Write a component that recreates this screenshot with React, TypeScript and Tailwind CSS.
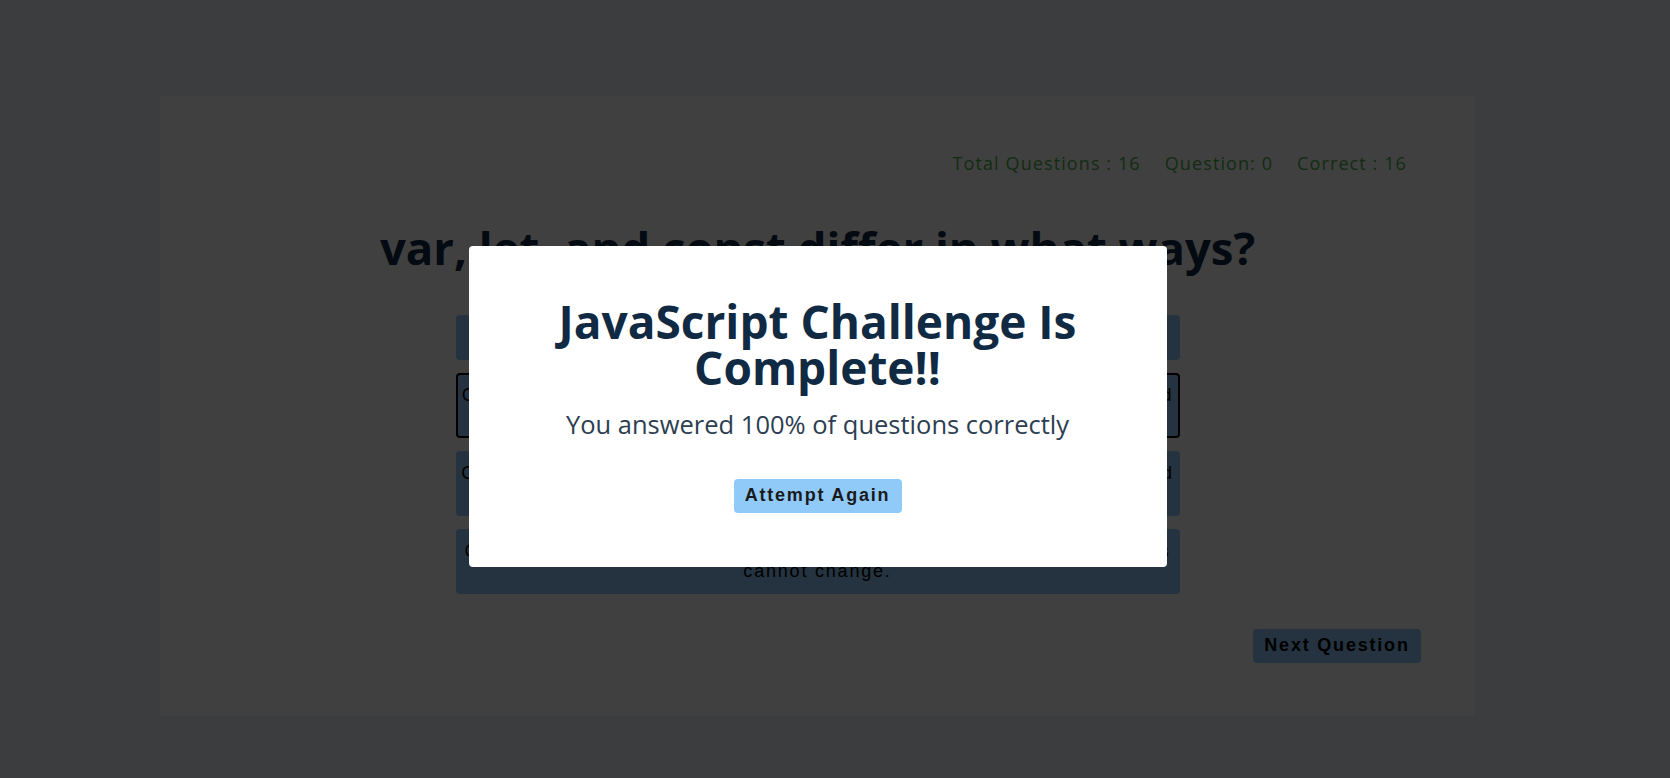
import { useState } from 'react';

const OPTIONS = [
  'They are all exactly the same.',
  'Const and let are block scoped, while var is function scoped, and hoisted to the top of its scope.',
  'Const and let are hoisted without any initialisation, while var is initialised as undefined.',
  'Const and let are block scoped, var is function scoped, and const values cannot change.',
];

const sans = "[font-family:'Open_Sans',sans-serif]";
const arial = "[font-family:'Liberation_Sans',Arial,sans-serif]";

export default function App() {
  const [selected] = useState(1);
  const [done] = useState(true);

  return (
    <div className="min-h-screen bg-[#f0f4fc] pt-[96px] pb-[62px]">
      {/* quiz card */}
      <div className="relative ml-[160px] w-[1315px] h-[620px] bg-white rounded-[4px] flex flex-col px-[54px] pt-[54px]">
        <div className={`${sans} flex justify-end gap-[24px] pr-[14px] text-[18px] tracking-[1.1px] text-[#4caf50]`}>
          <span>Total Questions : 16</span>
          <span>Question: 0</span>
          <span>Correct : 16</span>
        </div>

        <h2 className={`${sans} mt-[42px] text-center text-[45.5px] font-bold leading-[56px] text-[#102a43]`}>
          var, let, and const differ in what ways?
        </h2>

        <div className="mx-auto mt-[40px] w-[724px] flex flex-col gap-[13px]">
          {OPTIONS.map((o, i) => (
            <button
              key={i}
              className={`${arial} rounded-[4px] border-2 bg-[#90caf9] px-0 py-[10px] text-center text-[18px] leading-[20.5px] tracking-[0.1em] text-black ${
                selected === i ? 'border-black' : 'border-transparent'
              }`}
            >
              {o}
            </button>
          ))}
        </div>

        <div className="mt-[35px] flex justify-end">
          <button className={`${arial} h-[34px] w-[168px] rounded-[4px] bg-[#90caf9] text-[18px] font-bold tracking-[0.1em] text-black`}>
            Next Question
          </button>
        </div>

        {done && (
          <div className="absolute inset-0 z-20 flex items-center justify-center">
            <div className="w-[698px] h-[321px] rounded-[4px] bg-white flex flex-col items-center pt-[52px]">
              <h1 className={`${sans} w-[560px] text-center text-[46px] font-bold leading-[46px] text-[#102a43]`}>
                JavaScript Challenge Is Complete!!
              </h1>
              <p className={`${sans} mt-[17px] text-[25.5px] leading-[34px] text-[#2c3e50]`}>
                You answered 100% of questions correctly
              </p>
              <button className={`${arial} mt-[38px] h-[34px] w-[168px] rounded-[4px] bg-[#90caf9] text-[18px] font-bold tracking-[0.1em] text-[#1a1a1a]`}>
                Attempt Again
              </button>
            </div>
          </div>
        )}
      </div>

      {done && <div className="fixed inset-0 z-10 bg-black/75" />}
    </div>
  );
}
